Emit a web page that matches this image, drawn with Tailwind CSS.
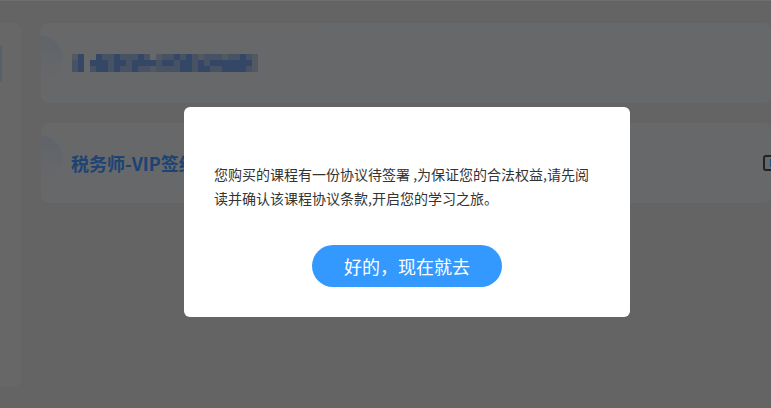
<!DOCTYPE html>
<html lang="zh-CN">
<head>
    <meta charset="UTF-8">
    <title>课程协议</title>
    <script src="https://cdn.jsdelivr.net/npm/@tailwindcss/browser@4"></script>
</head>
<body class="w-[771px] h-[408px] overflow-hidden bg-[#c9c9c9] font-['Noto_Sans_CJK_SC','Noto_Sans',sans-serif]">

<!-- Page behind the dialog -->
<div class="flex gap-5 pt-[22px] border-t border-[#dedede]">
    <div class="w-[21px] h-[364px] shrink-0 bg-[#cfcfcf] rounded-r-lg pt-[22px]">
        <div class="w-[2px] h-[37px] bg-[#b4c0d0] rounded-r"></div>
    </div>

    <div class="flex-1 flex flex-col gap-5">
        <!-- Card 1 -->
        <div class="relative h-20 overflow-hidden rounded-lg bg-gradient-to-br from-[#d0d0d2] to-[#cfd0d2] flex items-center pl-[31px]">
            <div class="absolute left-[-22px] top-[13px] w-11 h-11 rounded-full bg-gradient-to-b from-[#bfc9d5] to-[#d0d0d2]"></div>
            <div id="mosaic" class="grid grid-cols-[repeat(31,6px)] grid-rows-[repeat(3,6px)]"></div>
        </div>
        <!-- Card 2 -->
        <div class="relative h-20 overflow-hidden rounded-lg bg-gradient-to-br from-[#d0d0d2] to-[#cfd0d2] flex items-center justify-between pl-[30px]">
            <div class="absolute left-[-22px] top-[13px] w-11 h-11 rounded-full bg-gradient-to-b from-[#bfc9d5] to-[#d0d0d2]"></div>
            <span class="text-[18px] font-bold text-[#3a86e6] leading-6">税务师-VIP签约班</span>
            <span class="mr-[-14px] flex items-center justify-center w-[22px] h-4 border-2 border-[#444] rounded-[3px]">
                <span class="w-2 h-2 bg-[#48a0ff]"></span>
            </span>
        </div>
    </div>
</div>

<!-- Overlay -->
<div class="fixed inset-0 bg-black/50"></div>

<!-- Dialog -->
<div class="fixed left-[184px] top-[107px] w-[446px] h-[210px] bg-white rounded-md px-[30px] pt-[55px]">
    <p class="text-[14px] leading-6 text-[#333]">您购买的课程有一份协议待签署 ,为保证您的合法权益,请先阅读并确认该课程协议条款,开启您的学习之旅。</p>
    <div class="flex justify-center mt-[35px]">
        <button class="w-[190px] h-[42px] rounded-full bg-[#3399ff] text-white text-[18px]">好的，现在就去</button>
    </div>
</div>

<script>
    // blurred course title: 0 = gap, 1 = light, 2 = mid, 3 = dark
    const rows = [
        '1300322322232012232321222122321',
        '2303332332333323323323233333331',
        '2302332322322122223323322333321'
    ];
    const colors = ['#cfd0d2', '#a6b2c6', '#8ea4c8', '#6a8fcc'];
    const box = document.getElementById('mosaic');
    rows.join('').split('').forEach(function (c) {
        const cell = document.createElement('div');
        cell.style.background = colors[c];
        box.appendChild(cell);
    });
</script>
</body>
</html>
